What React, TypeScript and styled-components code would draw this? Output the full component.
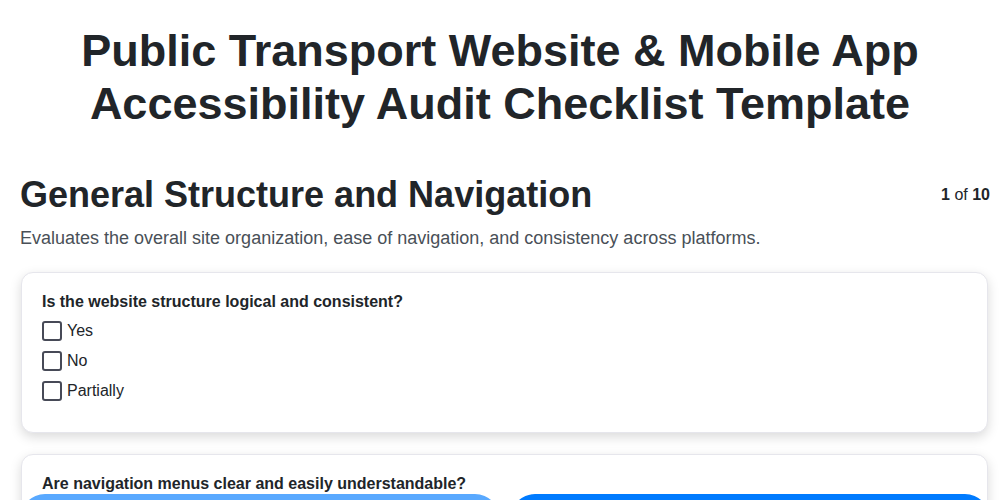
import React from 'react';
import styled, { createGlobalStyle } from 'styled-components';

const GlobalStyle = createGlobalStyle`
  body {
    margin: 0;
    background: #ffffff;
    font-family: 'Liberation Sans', Arial, sans-serif;
    color: #212529;
  }
`;

const Page = styled.div`
  padding-bottom: 80px;
`;

const Title = styled.h1`
  margin: 24px 0 43px;
  font-size: 45px;
  line-height: 53px;
  font-weight: 700;
  text-align: center;
  color: #212529;
`;

const Main = styled.main`
  padding: 0 10px 0 20px;
`;

const SectionHeader = styled.div`
  display: flex;
  justify-content: space-between;
  align-items: center;
`;

const SectionTitle = styled.h2`
  margin: 0;
  font-size: 36px;
  line-height: 1.2;
  font-weight: 700;
  color: #212529;
`;

const Counter = styled.div`
  font-size: 16px;
  color: #212529;
  b {
    font-weight: 700;
  }
`;

const Description = styled.p`
  margin: 9px 0 20px;
  font-size: 18px;
  line-height: 1.5;
  color: #495057;
`;

const Card = styled.div`
  margin: 0 2px 21px 1px;
  padding: 20px 20px 21px;
  border: 1px solid #e6e6ec;
  border-radius: 12px;
  background: #fff;
  box-shadow: 0 4px 12px rgba(0, 0, 0, 0.15);
`;

const Question = styled.div`
  margin-bottom: 9px;
  font-size: 16px;
  line-height: 1.15;
  font-weight: 700;
  color: #212529;
`;

const Options = styled.div`
  display: flex;
  flex-direction: column;
  gap: 10px;
  margin-bottom: 10px;
`;

const Option = styled.label`
  display: flex;
  align-items: center;
  gap: 5px;
  height: 20px;
  font-size: 16px;
  color: #212529;
`;

const Box = styled.span`
  width: 20px;
  height: 20px;
  box-sizing: border-box;
  border: 2px solid #474a57;
  border-radius: 3px;
  background: #fff;
`;

const Footer = styled.div`
  position: fixed;
  left: 20px;
  right: 10px;
  bottom: -54px;
  display: flex;
  gap: 10px;
`;

const NavButton = styled.button<{ $disabled?: boolean }>`
  flex: 1;
  height: 60px;
  border: none;
  border-radius: 25px;
  font-family: inherit;
  font-size: 16px;
  color: #fff;
  background: ${(p) => (p.$disabled ? '#59a9ff' : '#007bff')};
`;

const questions = [
  {
    text: 'Is the website structure logical and consistent?',
    options: ['Yes', 'No', 'Partially'],
  },
  {
    text: 'Are navigation menus clear and easily understandable?',
    options: ['Yes', 'No', 'Partially'],
  },
];

const App = () => {
  return (
    <Page>
      <GlobalStyle />
      <Title>
        Public Transport Website &amp; Mobile App
        <br />
        Accessibility Audit Checklist Template
      </Title>
      <Main>
        <SectionHeader>
          <SectionTitle>General Structure and Navigation</SectionTitle>
          <Counter>
            <b>1</b> of <b>10</b>
          </Counter>
        </SectionHeader>
        <Description>
          Evaluates the overall site organization, ease of navigation, and consistency across platforms.
        </Description>
        {questions.map((q) => (
          <Card key={q.text}>
            <Question>{q.text}</Question>
            <Options>
              {q.options.map((o) => (
                <Option key={o}>
                  <Box />
                  {o}
                </Option>
              ))}
            </Options>
          </Card>
        ))}
      </Main>
      <Footer>
        <NavButton $disabled>Previous</NavButton>
        <NavButton>Next</NavButton>
      </Footer>
    </Page>
  );
};

export default App;
